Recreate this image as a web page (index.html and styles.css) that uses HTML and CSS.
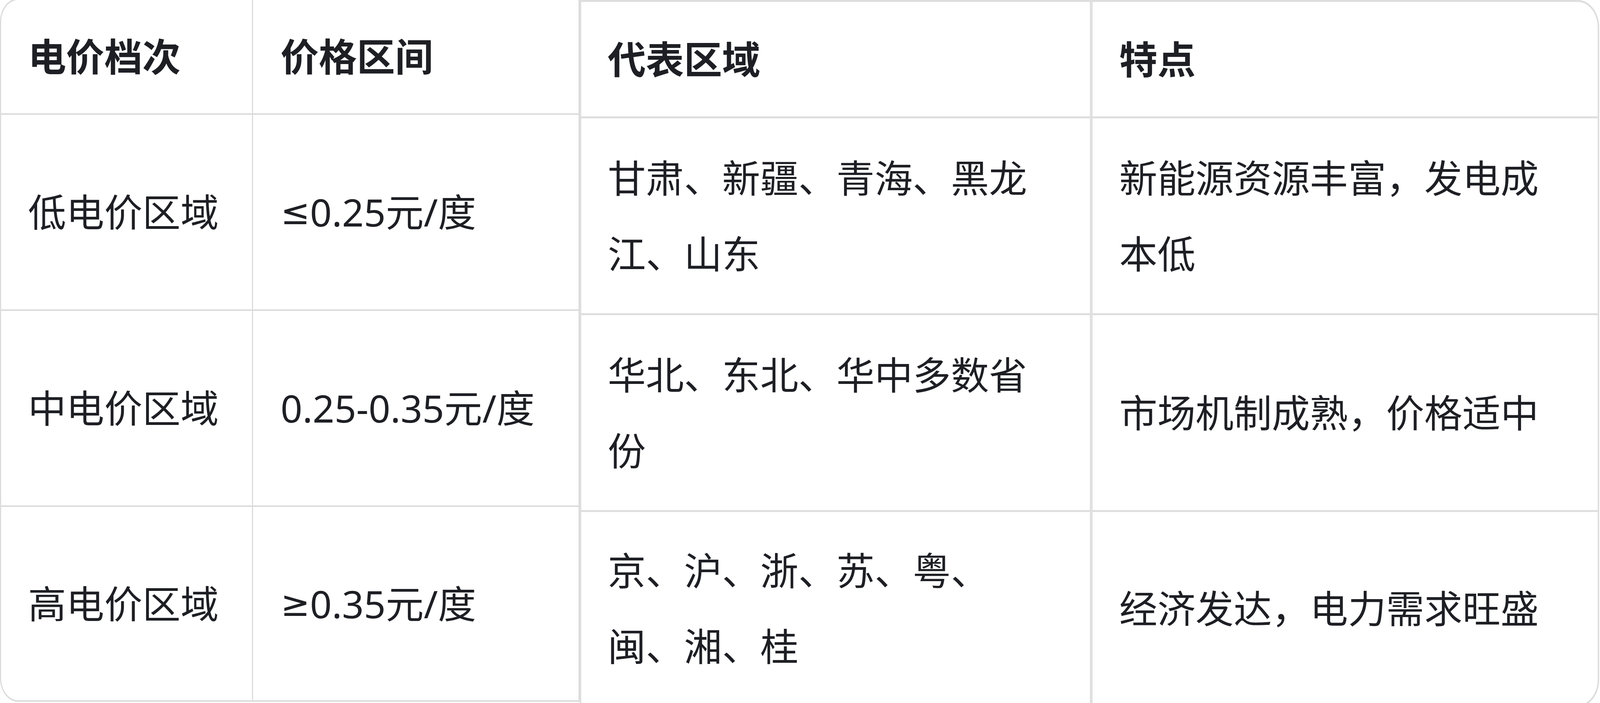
FILE: index.html
```html
<!DOCTYPE html>
<html lang="zh-CN">
<head>
<meta charset="utf-8">
<title>电价档次</title>
<link rel="stylesheet" href="styles.css">
</head>
<body>
<div class="page">
  <div class="tbl tbl-left" role="table">
    <div class="cell head c1">电价档次</div>
    <div class="cell head c2">价格区间</div>
    <div class="cell c1">低电价区域</div>
    <div class="cell c2"><span class="sym">≤</span>0.25元/度</div>
    <div class="cell c1">中电价区域</div>
    <div class="cell c2">0.25-0.35元/度</div>
    <div class="cell c1 last">高电价区域</div>
    <div class="cell c2 last"><span class="sym">≥</span>0.35元/度</div>
  </div>
  <div class="tbl tbl-right" role="table">
    <div class="cell head c3">代表区域</div>
    <div class="cell head c4">特点</div>
    <div class="cell c3">甘肃、新疆、青海、黑龙江、山东</div>
    <div class="cell c4">新能源资源丰富，发电成本低</div>
    <div class="cell c3">华北、东北、华中多数省份</div>
    <div class="cell c4">市场机制成熟，价格适中</div>
    <div class="cell c3 last">京、沪、浙、苏、粤、闽、湘、桂</div>
    <div class="cell c4 last">经济发达，电力需求旺盛</div>
  </div>
</div>
</body>
</html>
```

FILE: styles.css
```css
:root {
  --ux: calc(100vw / 5245);
  --uy: calc(100vh / 1800);
}

html, body {
  margin: 0;
  padding: 0;
  background: #ffffff;
  overflow: hidden;
}

body {
  font-family: "Noto Sans", "Noto Sans CJK SC", sans-serif;
  color: #1e1f24;
  font-size: calc(125 * var(--ux));
  line-height: calc(194 * var(--uy));
}

.page {
  display: flex;
  align-items: flex-start;
  width: calc(5245 * var(--ux));
  height: calc(1800 * var(--uy));
  overflow: hidden;
}

.tbl {
  display: grid;
  flex: none;
  box-sizing: border-box;
  background: #ffffff;
  overflow: hidden;
}

.tbl-left {
  width: calc(1900 * var(--ux));
  margin-top: calc(-4 * var(--uy));
  border-style: solid;
  border-color: #dcdcdc;
  border-width: calc(4 * var(--uy)) calc(4 * var(--ux));
  border-radius: calc(60 * var(--ux)) 0 0 calc(60 * var(--ux)) / calc(60 * var(--uy)) 0 0 calc(60 * var(--uy));
  grid-template-columns: calc(826 * var(--ux)) 1fr;
  grid-template-rows: calc(294 * var(--uy)) calc(502 * var(--uy)) calc(502 * var(--uy)) calc(495 * var(--uy));
}

.tbl-right {
  width: calc(3343 * var(--ux));
  border-style: solid;
  border-color: #dedede;
  border-width: calc(5 * var(--uy)) calc(6 * var(--ux));
  border-radius: 0 calc(70 * var(--ux)) calc(70 * var(--ux)) 0 / 0 calc(70 * var(--uy)) calc(70 * var(--uy)) 0;
  grid-template-columns: calc(1677 * var(--ux)) 1fr;
  grid-template-rows: calc(298 * var(--uy)) calc(504 * var(--uy)) calc(504 * var(--uy)) calc(494 * var(--uy));
}

.cell {
  display: flex;
  align-items: center;
  box-sizing: border-box;
  min-width: 0;
  border-bottom: calc(4 * var(--uy)) solid #dcdcdc;
}

.cell.last {
  border-bottom: none;
}

.head {
  font-weight: 700;
}

.sym {
  font-family: "DejaVu Sans", sans-serif;
  font-size: 0.92em;
}

.c1 {
  padding-left: calc(88 * var(--ux));
  border-right: calc(4 * var(--ux)) solid #dcdcdc;
}

.c2 {
  padding-left: calc(90 * var(--ux));
}

.tbl-right .cell {
  border-bottom-width: calc(5 * var(--uy));
  border-bottom-color: #dedede;
}

.tbl-right .cell.last {
  border-bottom: none;
}

.c3 {
  padding-left: calc(87 * var(--ux));
  padding-right: calc(140 * var(--ux));
  border-right: calc(10 * var(--ux)) solid #e0e0e0;
}

.c4 {
  padding-left: calc(87 * var(--ux));
  padding-right: calc(128 * var(--ux));
}
```
